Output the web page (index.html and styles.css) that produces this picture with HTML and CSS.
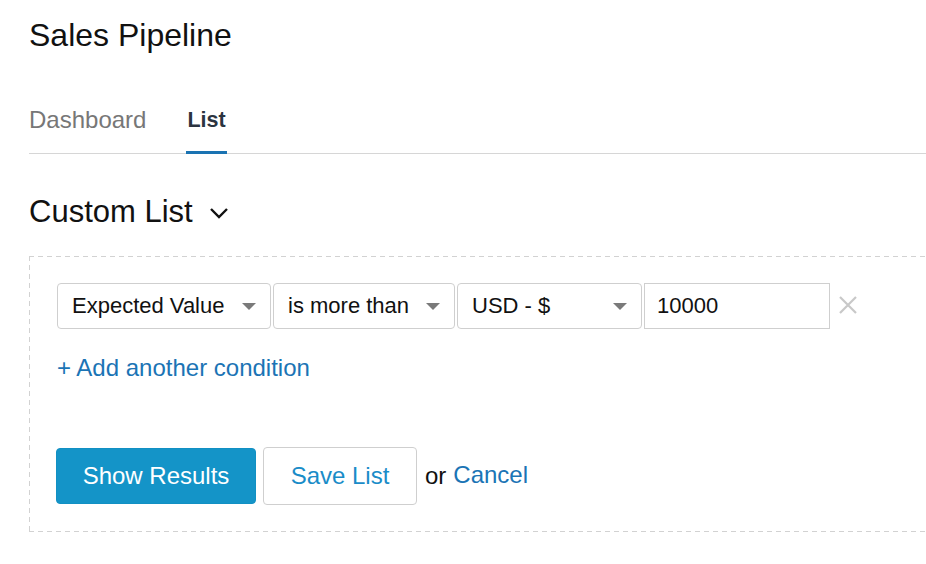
FILE: index.html
```html
<!DOCTYPE html>
<html>
<head>
<meta charset="utf-8">
<link rel="stylesheet" href="styles.css">
</head>
<body>
<div class="page">
  <h1 class="title">Sales Pipeline</h1>
  <nav class="tabs">
    <a class="tab">Dashboard</a>
    <a class="tab active">List</a>
  </nav>
  <h2 class="list-title">Custom List
    <svg class="chev" width="20" height="12" viewBox="0 0 20 12"><path d="M2 2 L10 10 L18 2" fill="none" stroke="#111" stroke-width="2.4"/></svg>
  </h2>
  <div class="filter-box">
    <div class="cond-row">
      <div class="select s1"><span>Expected Value</span><i class="caret"></i></div>
      <div class="select s2"><span>is more than</span><i class="caret"></i></div>
      <div class="select s3"><span>USD - $</span><i class="caret"></i></div>
      <div class="input">10000</div>
      <svg class="remove" width="20" height="20" viewBox="0 0 20 20"><path d="M2 2 L18 18 M18 2 L2 18" stroke="#c8c8c8" stroke-width="2.2"/></svg>
    </div>
    <a class="add-link">+ Add another condition</a>
    <div class="actions">
      <button class="btn primary">Show Results</button>
      <button class="btn secondary">Save List</button>
      <span class="or">or</span>
      <a class="cancel">Cancel</a>
    </div>
  </div>
</div>
</body>
</html>
```
FILE: styles.css
```css
html, body {
  margin: 0;
  padding: 0;
  background: #fff;
  overflow: hidden;
}
body {
  font-family: "Liberation Sans", Arial, Helvetica, sans-serif;
  color: #111;
}
.page {
  padding: 16px 0 0 29px;
  width: 960px;
}
.title {
  margin: 0;
  font-size: 32px;
  font-weight: normal;
  line-height: 38px;
}
.tabs {
  display: flex;
  gap: 41px;
  margin-top: 53px;
  border-bottom: 1px solid #d6d6d6;
}
.tab {
  font-size: 24px;
  line-height: 26px;
  padding-bottom: 20px;
  color: #777;
  position: relative;
}
.tab.active {
  font-weight: bold;
  color: #2b3440;
  font-size: 21.5px;
}
.tab.active::after {
  content: "";
  position: absolute;
  left: -1px;
  right: -1px;
  bottom: -1px;
  height: 3px;
  background: #1a73b2;
}
.list-title {
  margin: 40px 0 0;
  font-size: 31px;
  font-weight: normal;
  line-height: 36px;
  display: flex;
  align-items: center;
  gap: 16px;
}
.chev {
  margin-top: 2px;
}
.filter-box {
  margin-top: 26px;
  padding: 27px 0 27px 28px;
  background:
    repeating-linear-gradient(90deg, #d2d2d2 0 5px, transparent 5px 9px) top left / 100% 1px no-repeat,
    repeating-linear-gradient(90deg, #d2d2d2 0 5px, transparent 5px 9px) bottom left / 100% 1px no-repeat,
    repeating-linear-gradient(180deg, #d2d2d2 0 5px, transparent 5px 9px) top left / 1px 100% no-repeat;
}
.cond-row {
  display: flex;
  align-items: center;
  gap: 2px;
}
.select {
  height: 44px;
  border: 1px solid #cfcfcf;
  border-radius: 4px;
  display: flex;
  align-items: center;
  justify-content: space-between;
  padding: 0 14px 0 14px;
  font-size: 22px;
  color: #111;
  box-sizing: content-box;
}
.s1 { width: 184px; }
.s2 { width: 152px; }
.s3 { width: 155px; }
.caret {
  width: 0;
  height: 0;
  border-left: 7px solid transparent;
  border-right: 7px solid transparent;
  border-top: 7px solid #7a7a7a;
}
.input {
  height: 44px;
  width: 172px;
  border: 1px solid #cfcfcf;
  display: flex;
  align-items: center;
  padding-left: 12px;
  font-size: 22px;
}
.remove {
  margin-left: 6px;
  margin-top: -2px;
}
.add-link {
  display: block;
  margin-top: 25px;
  font-size: 24px;
  line-height: 28px;
  color: #1b74b5;
}
.actions {
  display: flex;
  align-items: center;
  margin-top: 65px;
  margin-left: -1px;
}
.btn {
  font-family: inherit;
  font-size: 24px;
  border-radius: 4px;
  cursor: pointer;
}
.btn.primary {
  width: 200px;
  height: 56px;
  background: #1494c8;
  border: 1px solid #1290c3;
  color: #fff;
}
.btn.secondary {
  margin-left: 7px;
  width: 154px;
  height: 58px;
  background: #fff;
  border: 1px solid #cfcfcf;
  color: #1a8cc8;
}
.or {
  margin-left: 8px;
  font-size: 24px;
  color: #111;
}
.cancel {
  margin-left: 7px;
  font-size: 24px;
  color: #1b74b5;
  margin-top: -3px;
}
```
